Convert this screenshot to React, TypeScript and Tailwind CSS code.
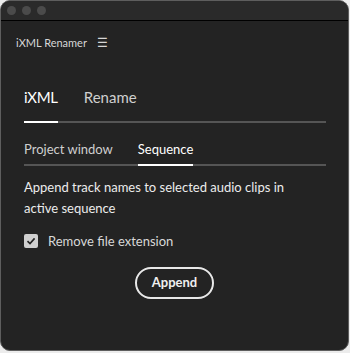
import { useState } from "react";

const font = { fontFamily: "Lato, 'Noto Sans', sans-serif" };

function TrafficLights() {
  return (
    <div className="flex items-center gap-[6px] pl-[6px]">
      <span className="w-[9px] h-[9px] rounded-full bg-[#4b4b4b]" />
      <span className="w-[9px] h-[9px] rounded-full bg-[#4b4b4b]" />
      <span className="w-[9px] h-[9px] rounded-full bg-[#4b4b4b]" />
    </div>
  );
}

export default function App() {
  const [tab, setTab] = useState("iXML");
  const [sub, setSub] = useState("Sequence");
  const [strip, setStrip] = useState(true);

  return (
    <div className="w-[350px] h-[353px] bg-[#ececec]" style={font}>
      <div className="w-[349px] h-[351px] rounded-[10px] border border-[#5e5e5e] bg-[#232323] overflow-hidden flex flex-col">
        {/* title bar */}
        <div className="h-[20px] bg-[#2a2a2a] border-b border-black flex items-center shrink-0">
          <TrafficLights />
        </div>

        {/* panel header */}
        <div className="flex items-center gap-[10px] pl-[15px] pt-[14px] text-[11px] text-[#d6d6d6]">
          <span>iXML Renamer</span>
          <span className="text-[12px] leading-none">☰</span>
        </div>

        <div className="px-[23px]">
          {/* main tabs */}
          <div className="mt-[35px] w-[302px] flex border-b-2 border-[#555]">
            {["iXML", "Rename"].map((t) => (
              <button
                key={t}
                type="button"
                onClick={() => setTab(t)}
                className={`-mb-[2px] pb-[14px] text-[15px] leading-[20px] border-b-2 ${
                  t === "iXML" ? "mr-[26px] tracking-[-0.3px]" : ""
                } ${tab === t ? "border-white text-white" : "border-transparent text-[#cfcfcf]"}`}
              >
                {t}
              </button>
            ))}
          </div>

          {/* sub tabs */}
          <div className="mt-[18px] w-[302px] flex border-b-2 border-[#555]">
            {["Project window", "Sequence"].map((t) => (
              <button
                key={t}
                type="button"
                onClick={() => setSub(t)}
                className={`-mb-[2px] pb-[6px] text-[13px] leading-[17px] border-b-2 ${
                  t === "Project window" ? "mr-[25px]" : ""
                } ${sub === t ? "border-white text-white" : "border-transparent text-[#cfcfcf]"}`}
              >
                {t}
              </button>
            ))}
          </div>

          <p className="mt-[11px] max-w-[280px] text-[13px] leading-[21px] text-[#ececec]">
            Append track names to selected audio clips in active sequence
          </p>

          <label className="mt-[13px] flex items-center gap-[10px] text-[13px] text-[#d8d8d8] cursor-pointer">
            <span
              onClick={() => setStrip(!strip)}
              className="w-[14px] h-[14px] rounded-[2px] bg-[#cfcfcf] flex items-center justify-center"
            >
              {strip && (
                <svg width="10" height="10" viewBox="0 0 10 10">
                  <path d="M1.5 5.2 L4 7.6 L8.6 2.4" fill="none" stroke="#222" strokeWidth="1.6" />
                </svg>
              )}
            </span>
            Remove file extension
          </label>

          <div className="mt-[16px] flex justify-center">
            <button
              type="button"
              className="w-[79px] h-[32px] rounded-full border-2 border-[#e8e8e8] text-[13px] font-bold text-[#f0f0f0]"
            >
              Append
            </button>
          </div>
        </div>
      </div>
    </div>
  );
}
